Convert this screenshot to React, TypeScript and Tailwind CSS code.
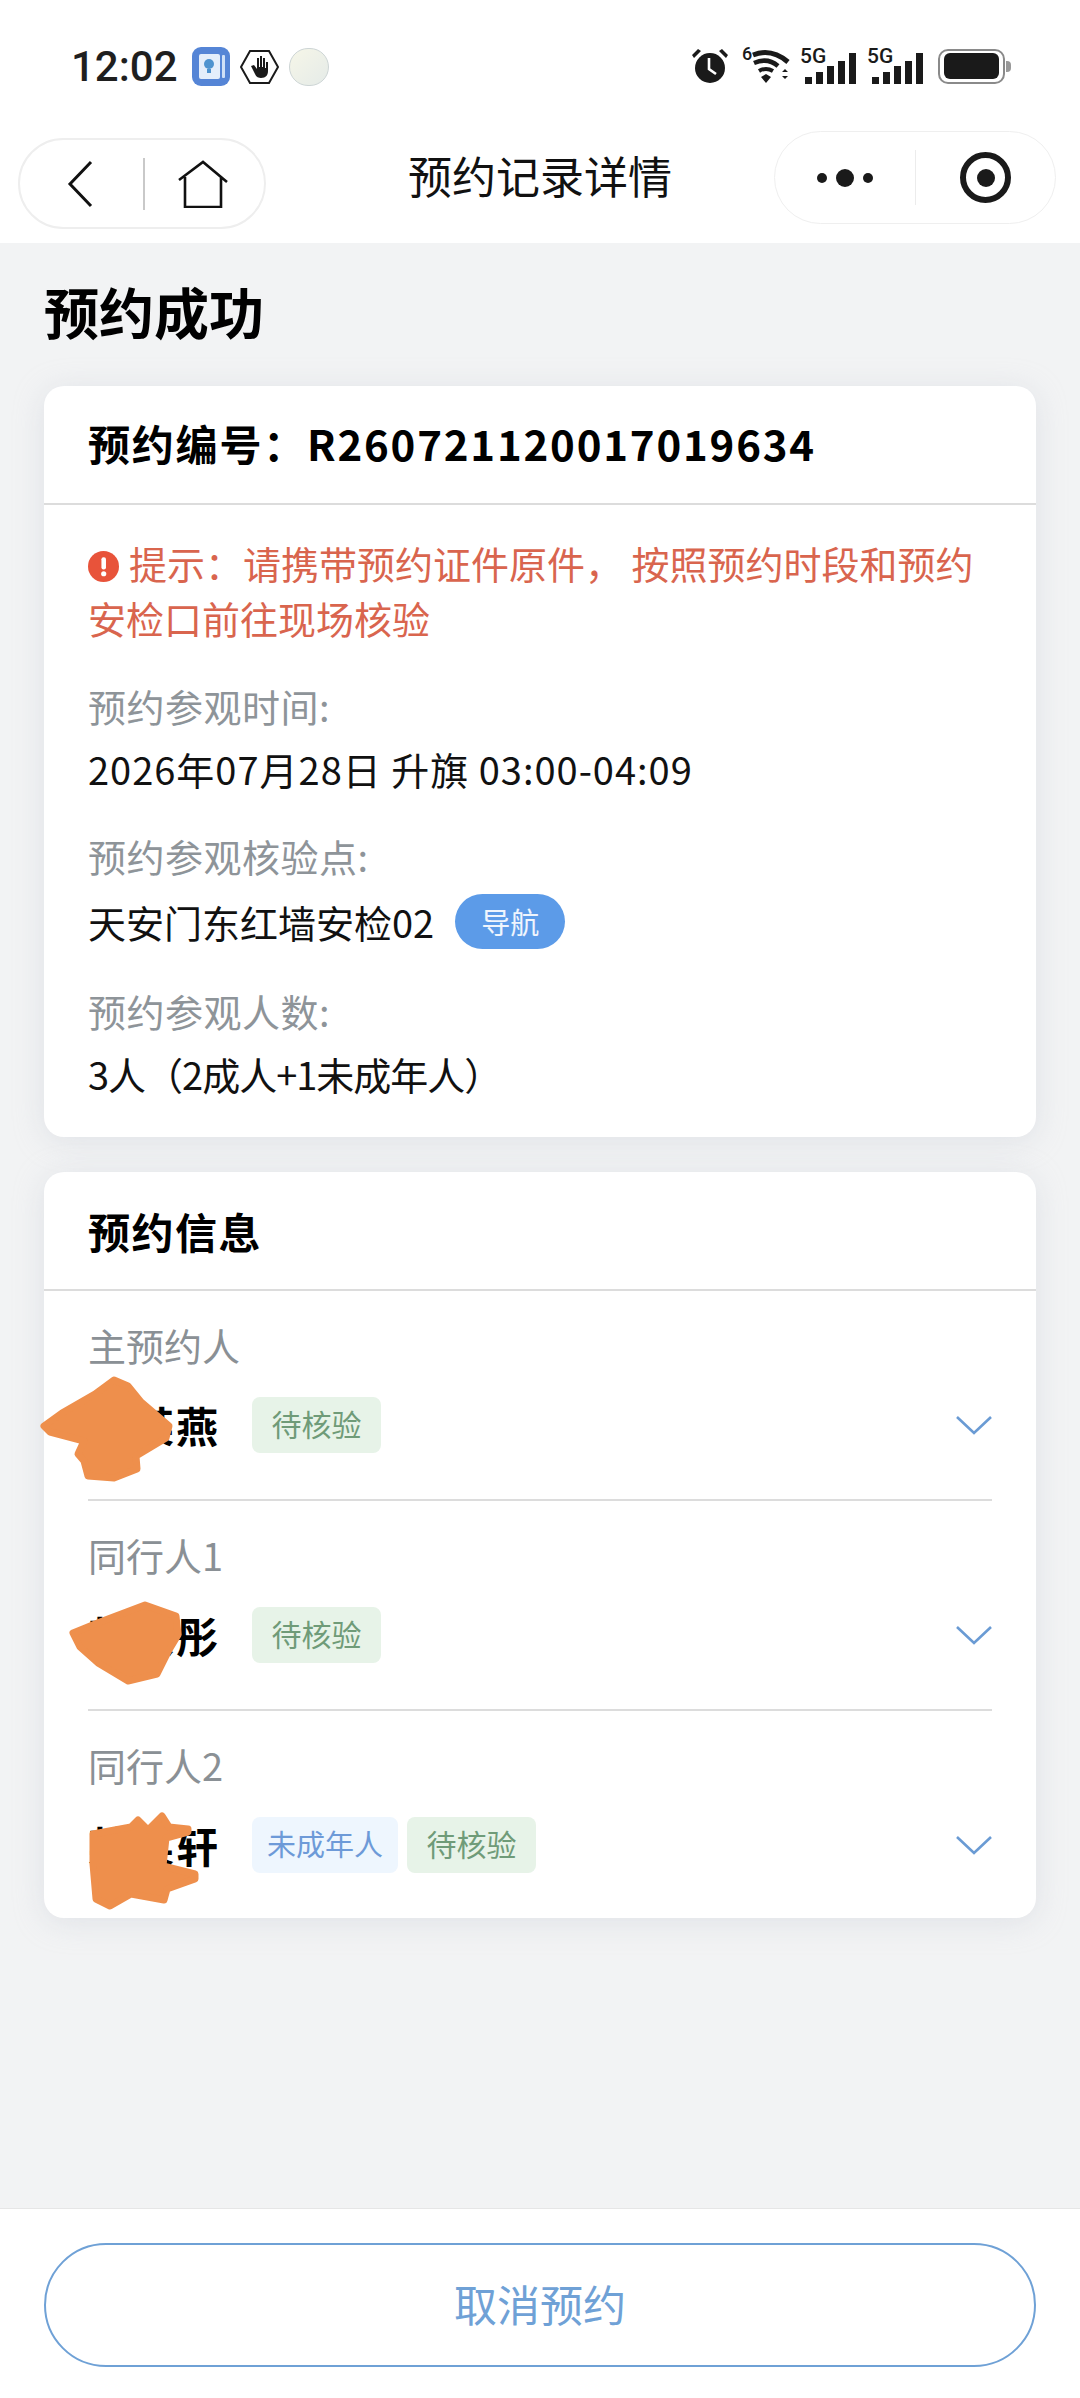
const font = { fontFamily: '"Noto Sans CJK SC", "Noto Sans", sans-serif' };

function FiveG() {
  return (
    <div className="relative h-[36px] w-[56px]">
      <span className="absolute left-0 top-0 text-[21px] font-medium leading-[17px] text-[#1a1a1a]" style={{ fontFamily: "Roboto, sans-serif" }}>
        5G
      </span>
      <svg className="absolute bottom-0 left-[5px]" width="51" height="31" viewBox="0 0 51 31" fill="#1a1a1a">
        <rect x="0" y="24" width="7" height="7" />
        <rect x="11" y="19" width="7" height="12" />
        <rect x="22" y="13" width="7" height="18" />
        <rect x="33" y="8" width="7" height="23" />
        <rect x="44" y="0" width="7" height="31" />
      </svg>
    </div>
  );
}

function StatusBar() {
  return (
    <div className="flex h-[88px] items-start justify-between pl-[71px] pr-[69px] pt-[47px]">
      <div className="flex items-center">
        <span className="text-[42px] font-medium leading-[38px] text-[#1f1f1f]" style={{ fontFamily: "Roboto, sans-serif" }}>
          12:02
        </span>
        <svg className="ml-[14px]" width="38" height="39" viewBox="0 0 38 39">
          <rect width="38" height="39" rx="9" fill="#5585d6" />
          <rect x="7" y="7" width="21" height="25" rx="2" fill="#e4eefb" />
          <rect x="30" y="8" width="3" height="23" rx="1" fill="#cfe0f7" />
          <circle cx="17" cy="17" r="5" fill="#4e93cf" />
          <rect x="15" y="22" width="4" height="4" fill="#4e93cf" />
        </svg>
        <svg className="ml-[10px]" width="39" height="34" viewBox="0 0 39 34">
          <path d="M10 1h19l9 16-9 16H10L1 17z" fill="#fff" stroke="#1a1a1a" strokeWidth="2" />
          <path d="M11 16l4 8c1 3 4 4 6 4 5 0 7-3 7-7v-9h-2v6h-1V8h-2v9h-1V6h-2v11h-1V8h-2v11l-3-4z" fill="#1a1a1a" />
        </svg>
        <div className="ml-[10px] h-[38px] w-[40px] rounded-full border border-[#cdd5d5] bg-gradient-to-br from-[#f6f6e8] to-[#e5ebe8]" />
      </div>
      <div className="flex items-center">
        <svg width="36" height="36" viewBox="0 0 36 36" fill="#1a1a1a">
          <circle cx="18" cy="20" r="15" />
          <path d="M0 7l6-6 3 2-7 7zM36 7l-6-6-3 2 7 7z" />
          <path d="M17 10v11l7 5" fill="none" stroke="#fff" strokeWidth="2.6" />
        </svg>
        <div className="relative ml-[14px] h-[38px] w-[48px]">
          <span className="absolute left-0 top-[-2px] text-[18px] font-medium leading-[18px] text-[#1a1a1a]" style={{ fontFamily: "Roboto, sans-serif" }}>
            6
          </span>
          <svg className="absolute left-[5px] top-[2px]" width="43" height="36" viewBox="0 0 43 36" fill="none">
            <path d="M6 6c10-4 22-4 35 7" stroke="#1a1a1a" strokeWidth="5" />
            <path d="M7 14c9-4 17-3 24 3" stroke="#1a1a1a" strokeWidth="4.5" />
            <path d="M12 22c5-3 9-3 14 0" stroke="#1a1a1a" strokeWidth="4" />
            <path d="M14 28l5-3 5 3-5 6zM35 23l3-3 3 3zM35 27l3 3 3-3z" fill="#1a1a1a" />
          </svg>
        </div>
        <div className="ml-[10px]">
          <FiveG />
        </div>
        <div className="ml-[11px]">
          <FiveG />
        </div>
        <div className="ml-[15px] flex items-center">
          <div className="flex h-[35px] w-[67px] items-center justify-center rounded-[10px] border-2 border-[#8a8a8a]">
            <div className="h-[26px] w-[55px] rounded-[6px] bg-[#1a1a1a]" />
          </div>
          <div className="ml-[1px] h-[11px] w-[5px] rounded-r bg-[#999]" />
        </div>
      </div>
    </div>
  );
}

function NavBar() {
  return (
    <div className="relative flex h-[155px] items-start justify-between pl-[18px] pr-[24px]">
      <div className="mt-[50px] flex h-[91px] w-[248px] items-center rounded-full border-2 border-[#eeeeee] bg-white">
        <div className="flex w-[123px] justify-center pr-[4px]">
          <svg width="26" height="48" viewBox="0 0 26 48" fill="none" stroke="#111" strokeWidth="3">
            <path d="M24 2L3 24l21 22" />
          </svg>
        </div>
        <div className="h-[52px] w-[2px] bg-[#c9c9c9]" />
        <div className="flex flex-1 justify-center pr-[4px]">
          <svg width="50" height="48" viewBox="0 0 50 48" fill="none" stroke="#111" strokeWidth="2.6">
            <path d="M1 20L25 2l24 20M7 17v30h36V17" />
          </svg>
        </div>
      </div>
      <h1 className="absolute left-0 right-0 top-[59px] text-center text-[44px] leading-[56px] text-[#111]">预约记录详情</h1>
      <div className="mt-[43px] flex h-[93px] w-[282px] items-center rounded-full border border-[#efefef] bg-white">
        <div className="flex w-[140px] items-center justify-center gap-[9px]">
          <div className="h-[10px] w-[10px] rounded-full bg-[#1a1a1a]" />
          <div className="h-[18px] w-[18px] rounded-full bg-[#1a1a1a]" />
          <div className="h-[10px] w-[10px] rounded-full bg-[#1a1a1a]" />
        </div>
        <div className="h-[55px] w-px bg-[#ececec]" />
        <div className="flex flex-1 justify-center">
          <div className="flex h-[51px] w-[51px] items-center justify-center rounded-full border-[6px] border-[#1a1a1a]">
            <div className="h-[18px] w-[18px] rounded-full bg-[#1a1a1a]" />
          </div>
        </div>
      </div>
    </div>
  );
}

function Tag({ tone, children }: { tone: "green" | "blue"; children: string }) {
  return (
    <span
      className={
        tone === "green"
          ? "flex h-[56px] w-[129px] items-center justify-center rounded-[8px] bg-[#e7f3e8] pb-[3px] text-[30px] text-[#6f9b78]"
          : "flex h-[56px] w-[146px] items-center justify-center rounded-[8px] bg-[#eef6fe] pb-[3px] text-[29px] text-[#6d9ad8]"
      }
    >
      {children}
    </span>
  );
}

// orange marker over the names, coordinates relative to the row's top left minus 88px
const scribbles = [
  "M44 135L62 122L95 103L114 89L128 95L141 111L169 135L166 147L136 165L137 178L114 187L88 185L84 170L78 163L84 150L50 141z",
  "M73 132L100 121L145 104L176 115L178 134L169 149L157 173L128 180L98 162L80 146z",
  "M93 123L131 116L138 109L148 119L162 105L169 116L188 118L188 121L166 127L163 155L195 163L195 168L167 178L164 189L131 183L110 195L96 188L93 153z",
];

type PersonTag = { tone: "green" | "blue"; text: string };

function Person({ label, name, tags, scribble, last }: { label: string; name: string; tags: PersonTag[]; scribble: string; last?: boolean }) {
  return (
    <div className={last ? "relative h-[207px] pt-[32px]" : "relative h-[210px] border-b-2 border-[#dcdcdc] pt-[32px]"}>
      <div className="text-[38px] leading-[44px] text-[#8a9095]">{label}</div>
      <div className="mt-[30px] flex items-center">
        <span className="w-[132px] text-[42px] font-bold leading-[56px] tracking-[2px] text-black">{name}</span>
        <div className="ml-[32px] flex gap-[9px]">
          {tags.map((t) => (
            <Tag key={t.text} tone={t.tone}>{t.text}</Tag>
          ))}
        </div>
        <svg className="ml-auto" width="36" height="20" viewBox="0 0 36 20" fill="none" stroke="#6a9bd4" strokeWidth="2.6">
          <path d="M1 2l17 16L35 2" />
        </svg>
      </div>
      <svg className="absolute left-[-88px] top-0" width="300" height="207" viewBox="0 0 300 207">
        <path d={scribble} fill="#ee8f4c" stroke="#ee8f4c" strokeWidth="7" strokeLinejoin="round" />
      </svg>
    </div>
  );
}

function Field({ label, children }: { label: string; children: React.ReactNode }) {
  return (
    <div>
      <div className="text-[38px] leading-[48px] tracking-[0.5px] text-[#8e9499]">{label}</div>
      <div className="mt-[14px] text-[38px] leading-[50px] text-[#111]">{children}</div>
    </div>
  );
}

export default function App() {
  return (
    <div className="flex h-[2398px] w-[1080px] flex-col overflow-hidden bg-[#f2f3f4]" style={font}>
      <div className="shrink-0 bg-white">
        <StatusBar />
        <NavBar />
      </div>

      <main className="flex-1 px-[44px]">
        <h2 className="mt-[31px] text-[55px] font-bold leading-[72px] text-black">预约成功</h2>

        <section className="mt-[40px] rounded-[20px] bg-white shadow-[0_4px_30px_rgba(190,195,205,0.35)]">
          <div className="flex h-[119px] items-center border-b-2 border-[#dcdcdc] pb-[5px] pl-[44px] text-[42px] font-bold tracking-[1.8px] text-black">
            预约编号：R260721120017019634
          </div>
          <div className="flex h-[632px] flex-col px-[44px] pt-[30px]">
            <p className="text-[38px] leading-[55px] text-[#d9654e]">
              <svg className="mb-[5px] mr-[10px] inline-block" width="31" height="31" viewBox="0 0 30 30">
                <circle cx="15" cy="15" r="15" fill="#e8533a" />
                <rect x="13" y="6" width="4.4" height="12" rx="2" fill="#fff" />
                <circle cx="15.2" cy="22" r="2.5" fill="#fff" />
              </svg>
              提示：请携带预约证件原件， 按照预约时段和预约安检口前往现场核验
            </p>
            <div className="mt-[37px] flex flex-col gap-[38px]">
              <Field label="预约参观时间:">
                <span className="tracking-[1px]">2026年07月28日 升旗 03:00-04:09</span>
              </Field>
              <Field label="预约参观核验点:">
                <span className="flex items-center">
                  天安门东红墙安检02
                  <span className="ml-[21px] flex h-[55px] w-[110px] items-center justify-center rounded-full bg-[#5c9be8] pb-[2px] text-[29px] text-white/90">导航</span>
                </span>
              </Field>
              <Field label="预约参观人数:">
                <span className="tracking-[-1px]">3人（2成人+1未成年人）</span>
              </Field>
            </div>
          </div>
        </section>

        <section className="mt-[35px] rounded-[20px] bg-white shadow-[0_4px_30px_rgba(190,195,205,0.35)]">
          <div className="flex h-[119px] items-center border-b-2 border-[#dcdcdc] pl-[44px] text-[42px] font-bold tracking-[1.5px] text-black">预约信息</div>
          <div className="mx-[44px]">
            <Person label="主预约人" name="某某燕" scribble={scribbles[0]} tags={[{ tone: "green", text: "待核验" }]} />
            <Person label="同行人1" name="某某彤" scribble={scribbles[1]} tags={[{ tone: "green", text: "待核验" }]} />
            <Person label="同行人2" name="某某轩" scribble={scribbles[2]} last tags={[{ tone: "blue", text: "未成年人" }, { tone: "green", text: "待核验" }]} />
          </div>
        </section>
      </main>

      <footer className="flex h-[190px] shrink-0 items-start justify-center border-t border-[#e6e6e6] bg-white pt-[34px]">
        <button type="button" className="h-[124px] w-[992px] rounded-full border-2 border-[#6fa1d6] pb-[4px] text-[43px] text-[#6fa1d6]">
          取消预约
        </button>
      </footer>
    </div>
  );
}
